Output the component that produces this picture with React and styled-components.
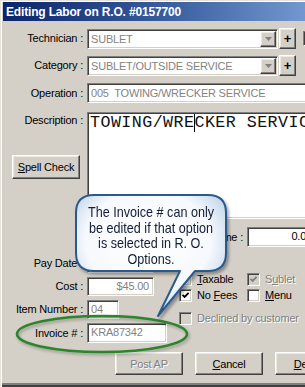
import React from "react";
import styled, { createGlobalStyle, css } from "styled-components";

const Global = createGlobalStyle`
  html, body { margin: 0; padding: 0; background: #d4d0c8; overflow: hidden; }
  body { font-family: "Liberation Sans", Arial, sans-serif; }
`;

const raised = css`
  background: #d4d0c8;
  border: 1px solid;
  border-color: #fff #404040 #404040 #fff;
  box-shadow: inset -1px -1px #808080, inset 1px 1px #ece9e2;
`;

const sunken = css`
  border: 1px solid;
  border-color: #808080 #fff #fff #808080;
  box-shadow: inset 1px 1px #404040, inset -1px -1px #d4d0c8;
`;

const Window = styled.div`
  position: relative;
  width: 305px;
  height: 387px;
  overflow: hidden;
  box-sizing: border-box;
  padding: 2px 0 0 3px;
  background: #d4d0c8;
  box-shadow: inset 1px 1px #e6e3dc, inset 2px 2px #fff, inset 0 -2px #404040,
    inset 0 -4px #808080;
  font-family: "Liberation Sans", Arial, sans-serif;
  font-size: 11px;
  letter-spacing: -0.2px;
  color: #000;
  display: flex;
  flex-direction: column;
`;

const TitleBar = styled.div`
  flex-shrink: 0;
  height: 19px;
  box-sizing: border-box;
  padding: 2px 0 0 3px;
  background: linear-gradient(90deg, #0a246a 0%, #3a5f9f 55%, #7397cf 100%);
  color: #fff;
  font-weight: bold;
  font-size: 12px;
  line-height: 17px;
  letter-spacing: -0.17px;
  white-space: nowrap;
`;

const Row = styled.div`
  display: grid;
  grid-template-columns: 80px max-content;
  column-gap: 4px;
  align-items: ${(p) => (p.$top ? "start" : "center")};
  height: ${(p) => p.$h}px;
  margin-top: ${(p) => p.$mt || 0}px;
`;

const Label = styled.div`
  text-align: right;
  white-space: nowrap;
  line-height: 13px;
`;

const LabelStack = styled.div`
  display: flex;
  flex-direction: column;
  align-items: flex-end;
  padding-top: 2px;
`;

const Controls = styled.div`
  display: flex;
  align-items: center;
`;

const Combo = styled.div`
  ${sunken};
  display: flex;
  align-items: center;
  width: ${(p) => p.$w}px;
  height: 20px;
  box-sizing: border-box;
  background: #fff;
  padding: 1px;
`;

const FieldText = styled.div`
  flex: 1;
  padding-left: 2px;
  color: #838383;
  line-height: 16px;
  white-space: pre;
  overflow: hidden;
`;

const DropButton = styled.div`
  ${raised};
  width: 16px;
  height: 16px;
  box-sizing: border-box;
  display: flex;
  align-items: center;
  justify-content: center;
`;

const PlusButton = styled.div`
  ${raised};
  width: 17px;
  height: 21px;
  box-sizing: border-box;
  margin-left: 1px;
  display: flex;
  align-items: center;
  justify-content: center;
  font-size: 13px;
  font-weight: bold;
  line-height: 1;
  padding-bottom: 1px;
`;

const MiniBox = styled.div`
  ${sunken};
  width: 13px;
  height: 13px;
  margin-left: 7px;
  flex-shrink: 0;
  background: #d4d0c8;
`;

const TextBox = styled.div`
  ${sunken};
  width: ${(p) => p.$w}px;
  height: ${(p) => p.$h || 19}px;
  box-sizing: border-box;
  background: #fff;
  padding: 0 ${(p) => (p.$right ? 4 : 0)}px 0 ${(p) => (p.$right ? 0 : 3)}px;
  text-align: ${(p) => (p.$right ? "right" : "left")};
  line-height: ${(p) => (p.$h || 19) - 3}px;
  white-space: pre;
  overflow: hidden;
  color: ${(p) => (p.$dark ? "#000" : "#838383")};
`;

const DescBox = styled.div`
  ${sunken};
  width: 240px;
  height: 107px;
  box-sizing: border-box;
  background: #fff;
  padding: 1px 0 0 2px;
  font-family: "Liberation Mono", "Courier New", monospace;
  font-size: 16.67px;
  line-height: 18px;
  letter-spacing: 0.45px;
  color: #111;
  white-space: pre;
  overflow: hidden;
`;

const Caret = styled.span`
  display: inline-block;
  width: 0;
  height: 18px;
  border-left: 1px solid #000;
  margin-right: -1px;
  vertical-align: top;
`;

const WinButton = styled.div`
  ${raised};
  width: ${(p) => p.$w || 68}px;
  height: ${(p) => p.$h || 23}px;
  flex-shrink: 0;
  box-sizing: border-box;
  display: flex;
  align-items: center;
  justify-content: center;
  white-space: nowrap;
  color: ${(p) => (p.$disabled ? "#808080" : "#000")};
  text-shadow: ${(p) => (p.$disabled ? "1px 1px #fff" : "none")};
`;

const SpellButton = styled(WinButton)`
  margin-top: 28px;
  margin-right: 3px;
`;

const U = styled.span`
  text-decoration: underline;
  text-underline-offset: 1px;
`;

const Bottom = styled.div`
  display: grid;
  grid-template-columns: 176px auto;
`;

const LeftCol = styled.div`
  display: flex;
  flex-direction: column;
  gap: 4px;
  padding-top: 35px;
`;

const RightCol = styled.div`
  display: flex;
  flex-direction: column;
  padding-top: 8px;
`;

const TimeRow = styled.div`
  display: flex;
  align-items: center;
  height: 20px;
  gap: 4px;
`;

const TimeLabel = styled.div`
  width: 64px;
  text-align: right;
  white-space: nowrap;
`;

const CheckRow = styled.div`
  display: flex;
  align-items: center;
  height: 16px;
  margin-top: ${(p) => p.$mt || 0}px;
`;

const CheckCell = styled.div`
  display: flex;
  align-items: center;
  gap: 5px;
  width: ${(p) => (p.$w ? p.$w + "px" : "auto")};
  flex-shrink: 0;
  white-space: nowrap;
  color: ${(p) => (p.$disabled ? "#808080" : "#000")};
  text-shadow: ${(p) => (p.$disabled ? "1px 1px #fff" : "none")};
`;

const Box = styled.div`
  ${sunken};
  width: 13px;
  height: 13px;
  box-sizing: border-box;
  flex-shrink: 0;
  background: ${(p) => (p.$disabled ? "#d4d0c8" : "#fff")};
  display: flex;
  align-items: center;
  justify-content: center;
`;

const ButtonRow = styled.div`
  display: flex;
  gap: 12px;
  padding-left: 112px;
  margin-top: 9px;
`;

const Callout = styled.div`
  position: absolute;
  left: 70px;
  top: 188px;
  width: 170px;
  height: 140px;
  pointer-events: none;
`;

const CalloutSvg = styled.svg`
  position: absolute;
  left: 0;
  top: 0;
`;

const CalloutTextWrap = styled.div`
  position: absolute;
  left: 6px;
  top: 16px;
  width: 150px;
  display: flex;
  justify-content: center;
`;

const CalloutText = styled.div`
  flex-shrink: 0;
  width: 180px;
  text-align: center;
  font-family: "Liberation Sans", Arial, sans-serif;
  font-size: 15px;
  line-height: 15.5px;
  letter-spacing: 0;
  color: #131d36;
  transform: scaleX(0.84);
  white-space: nowrap;
`;

const Highlight = styled.svg`
  position: absolute;
  left: 12px;
  top: 312px;
  pointer-events: none;
`;

const Arrow = ({ color = "#808080" }) => (
  <svg width="7" height="4" viewBox="0 0 7 4">
    <polygon points="0,0 7,0 3.5,4" fill={color} />
  </svg>
);

const Check = ({ color = "#000" }) => (
  <svg width="9" height="9" viewBox="0 0 9 9">
    <path d="M1.5 3.8 L3.6 5.9 L7.6 1.9" stroke={color} strokeWidth="1.9" fill="none" />
  </svg>
);

const CheckItem = ({ w, checked, disabled, children }) => (
  <CheckCell $w={w} $disabled={disabled}>
    <Box $disabled={disabled}>{checked && <Check color={disabled ? "#808080" : "#000"} />}</Box>
    <span>{children}</span>
  </CheckCell>
);

export default function App() {
  return (
    <>
      <Global />
      <Window>
        <TitleBar>Editing Labor on R.O. #0157700</TitleBar>

        <Row $h={20} $mt={7}>
          <Label>Technician :</Label>
          <Controls>
            <Combo $w={191}>
              <FieldText>SUBLET</FieldText>
              <DropButton>
                <Arrow />
              </DropButton>
            </Combo>
            <PlusButton>+</PlusButton>
            <MiniBox />
          </Controls>
        </Row>

        <Row $h={20} $mt={7}>
          <Label>Category :</Label>
          <Controls>
            <Combo $w={191}>
              <FieldText>SUBLET/OUTSIDE SERVICE</FieldText>
              <DropButton>
                <Arrow />
              </DropButton>
            </Combo>
            <PlusButton>+</PlusButton>
          </Controls>
        </Row>

        <Row $h={20} $mt={8}>
          <Label>Operation :</Label>
          <Controls>
            <Combo $w={240}>
              <FieldText>005  TOWING/WRECKER SERVICE</FieldText>
            </Combo>
          </Controls>
        </Row>

        <Row $h={107} $mt={9} $top>
          <LabelStack>
            <Label>Description :</Label>
            <SpellButton $h={24}>
              <span>
                <U>S</U>pell Check
              </span>
            </SpellButton>
          </LabelStack>
          <DescBox>
            TOWING/WRE
            <Caret />
            CKER SERVICE
          </DescBox>
        </Row>

        <Bottom>
          <LeftCol>
            <Row $h={19}>
              <Label>Pay Date :</Label>
              <TextBox $w={66} />
            </Row>
            <Row $h={19}>
              <Label>Cost :</Label>
              <TextBox $w={67} $right>
                $45.00
              </TextBox>
            </Row>
            <Row $h={19}>
              <Label>Item Number :</Label>
              <TextBox $w={32}>04</TextBox>
            </Row>
            <Row $h={20}>
              <Label>Invoice # :</Label>
              <TextBox $w={80} $h={20}>
                KRA87342
              </TextBox>
            </Row>
          </LeftCol>

          <RightCol>
            <TimeRow>
              <TimeLabel>Time :</TimeLabel>
              <TextBox $w={70} $h={20} $right $dark>
                0.00
              </TextBox>
            </TimeRow>
            <CheckRow $mt={24}>
              <CheckItem w={68} checked>
                <U>T</U>axable
              </CheckItem>
              <CheckItem checked disabled>
                S<U>u</U>blet
              </CheckItem>
            </CheckRow>
            <CheckRow>
              <CheckItem w={68} checked>
                No <U>F</U>ees
              </CheckItem>
              <CheckItem>
                <U>M</U>enu
              </CheckItem>
            </CheckRow>
            <CheckRow $mt={7}>
              <CheckItem disabled>Declined by customer</CheckItem>
            </CheckRow>
          </RightCol>
        </Bottom>

        <ButtonRow>
          <WinButton $disabled>Post AP</WinButton>
          <WinButton>
            <span>
              <U>C</U>ancel
            </span>
          </WinButton>
          <WinButton>
            <span>
              <U>D</U>elete
            </span>
          </WinButton>
        </ButtonRow>

        <Highlight width="190" height="48" viewBox="0 0 190 48">
          <defs>
            <filter id="hlBlur" x="-10%" y="-30%" width="120%" height="160%">
              <feGaussianBlur stdDeviation="1.4" />
            </filter>
          </defs>
          <ellipse
            cx="91.5"
            cy="24"
            rx="85"
            ry="18"
            fill="none"
            stroke="rgba(0,0,0,0.28)"
            strokeWidth="2.5"
            filter="url(#hlBlur)"
          />
          <ellipse cx="90" cy="22" rx="85" ry="18" fill="none" stroke="#2b852b" strokeWidth="2.6" />
        </Highlight>

        <Callout>
          <CalloutSvg width="170" height="140" viewBox="0 0 170 140">
            <defs>
              <radialGradient id="bubbleFill" cx="48%" cy="38%" r="70%">
                <stop offset="0" stopColor="#ffffff" />
                <stop offset="0.6" stopColor="#f6f9fd" />
                <stop offset="1" stopColor="#a8c2e2" />
              </radialGradient>
              <filter id="bubbleShadow" x="-10%" y="-10%" width="125%" height="130%">
                <feDropShadow dx="2" dy="2.5" stdDeviation="1.8" floodColor="#000" floodOpacity="0.35" />
              </filter>
            </defs>
            <path
              d="M24,7 H138 Q156,7 156,25 V65 Q156,83 138,83 H125 L88,128 L110,83 H24 Q6,83 6,65 V25 Q6,7 24,7 Z"
              fill="url(#bubbleFill)"
              stroke="#2c5a8c"
              strokeWidth="2"
              strokeLinejoin="round"
              filter="url(#bubbleShadow)"
            />
          </CalloutSvg>
          <CalloutTextWrap>
            <CalloutText>
              The Invoice # can only
              <br />
              be edited if that option
              <br />
              is selected in R. O.
              <br />
              Options.
            </CalloutText>
          </CalloutTextWrap>
        </Callout>
      </Window>
    </>
  );
}
